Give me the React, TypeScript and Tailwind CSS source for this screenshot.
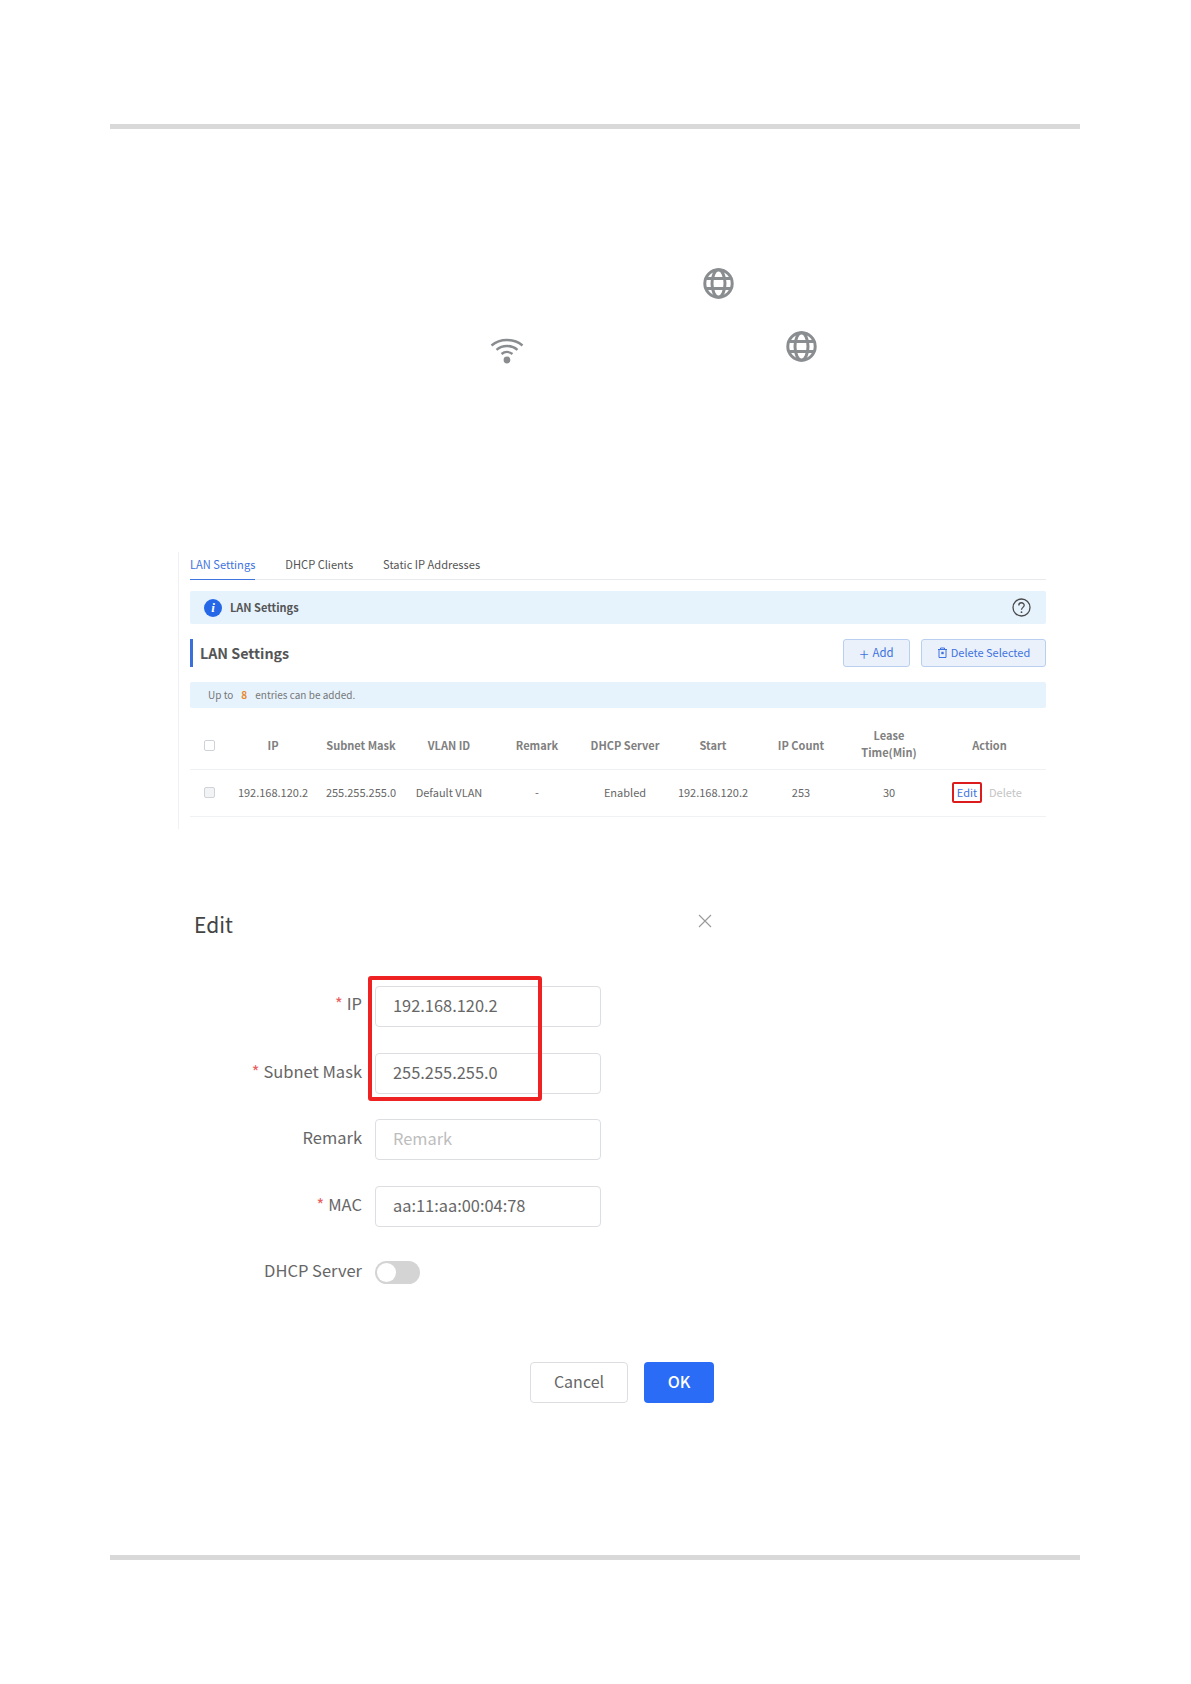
import React from "react";

const font = { fontFamily: '"Noto Sans CJK SC", "Noto Sans", sans-serif' };

function Globe() {
  return (
    <svg width="31" height="31" viewBox="0 0 31 31" fill="none" stroke="#8a8d90" strokeWidth="3">
      <circle cx="15.5" cy="15.5" r="13.7" />
      <ellipse cx="15.5" cy="15.5" rx="6.5" ry="13.7" />
      <path d="M3.5 10.5h24M3.5 20.5h24" />
    </svg>
  );
}

function Wifi() {
  return (
    <svg width="34" height="27" viewBox="0 0 34 27" fill="none" stroke="#8a8d90" strokeWidth="2.4">
      <path d="M1.5 8.5C10 1.2 24 1.2 32.500 8.500" />
      <path d="M6.500 12.800C12.500 7.800 21.500 7.800 27.500 12.800" />
      <path d="M11.500 17C14.800 14.400 19.200 14.400 22.500 17" />
      <circle cx="17" cy="23" r="3.400" fill="#8a8d90" stroke="none" />
    </svg>
  );
}

function Trash() {
  return (
    <svg width="11" height="11" viewBox="0 0 11 11" fill="none" stroke="#3f73e0" strokeWidth="1">
      <path d="M1 2.500h9M3.500 2.500V1h4v1.500M2 2.500V10.500h7V2.500" />
      <rect x="4.300" y="4.800" width="2.400" height="2.400" fill="#3f73e0" stroke="none" />
    </svg>
  );
}

const headers = ["IP", "Subnet Mask", "VLAN ID", "Remark", "DHCP Server", "Start", "IP Count"];
const cells = ["192.168.120.2", "255.255.255.0", "Default VLAN", "-", "Enabled", "192.168.120.2", "253", "30"];

function Checkbox({ filled }: { filled?: boolean }) {
  return (
    <div className={`h-[11px] w-[11px] rounded-[2px] border border-[#cfd3d8] ${filled ? "bg-[#f2f3f5]" : "bg-white"}`} />
  );
}

function LanTable() {
  return (
    <div className="ml-[178px] h-[277px] w-[868px] border-l border-[#f0f1f3] pl-[11px] pt-[3px]">
      <div className="flex h-[25px] gap-[30px] border-b border-[#e8eaed] text-[11.100px] leading-[18px] text-[#555]">
        <div className="h-[25px] border-b border-[#3f73e0] text-[#3f73e0]">LAN Settings</div>
        <div>DHCP Clients</div>
        <div>Static IP Addresses</div>
      </div>
      <div className="mt-[11px] flex h-[33px] items-center rounded-[2px] bg-[#e6f3fd] pl-[14px] pr-[15px]">
        <div className="flex h-[18px] w-[18px] items-center justify-center rounded-full bg-[#2468e8] text-[13px] font-bold italic leading-none text-white" style={{ fontFamily: '"Liberation Serif", serif' }}>
          i
        </div>
        <div className="ml-[8px] text-[11px] font-bold text-[#555]">LAN Settings</div>
        <svg className="ml-auto" width="19" height="19" viewBox="0 0 19 19" fill="none" stroke="#4a4a4a" strokeWidth="1.300">
          <circle cx="9.500" cy="9.500" r="8.500" />
          <path d="M6.800 7.400C6.800 3.900 12.200 3.900 12.200 7.300C12.200 9.300 9.500 9.500 9.500 11.800" />
          <circle cx="9.500" cy="14.200" r="0.900" fill="#4a4a4a" stroke="none" />
        </svg>
      </div>
      <div className="mt-[15px] flex h-[28px] items-center">
        <div className="h-full w-[3px] bg-[#3a6fdc]" />
        <div className="ml-[7px] text-[14.300px] font-bold text-[#555]">LAN Settings</div>
        <div className="ml-auto flex h-[28px] w-[67px] items-center justify-center gap-[4px] rounded-[3px] border border-[#b9cff0] bg-[#eaf1fb] text-[11.400px] text-[#3f73e0]">
          <span className="text-[17px] font-light leading-none">+</span>Add
        </div>
        <div className="ml-[11px] flex h-[28px] w-[125px] items-center justify-center gap-[3px] rounded-[3px] border border-[#b9cff0] bg-[#eaf1fb] pb-[2px] text-[11px] text-[#3f73e0]">
          <Trash />Delete Selected
        </div>
      </div>
      <div className="mt-[15px] flex h-[26px] items-center rounded-[2px] bg-[#e6f3fd] pb-[1px] pl-[18px] text-[10px] text-[#777]">
        Up to<span className="mx-[8px] font-bold text-[#e8862e]">8</span>entries can be added.
      </div>
      <div className="mt-[10px] grid h-[52px] grid-cols-[39px_repeat(8,88px)_113px] items-center border-b border-[#f0f1f3] pt-[4px] text-center text-[11px] font-bold text-[#808080]">
        <div className="pl-[14px]"><Checkbox /></div>
        {headers.map((h) => (
          <div key={h}>{h}</div>
        ))}
        <div className="-mt-[4px] leading-[17px]">Lease<br />Time(Min)</div>
        <div>Action</div>
      </div>
      <div className="grid h-[47px] grid-cols-[39px_repeat(8,88px)_113px] items-center border-b border-[#f0f1f3] pb-[2px] text-center text-[11px] text-[#666]">
        <div className="pl-[14px]"><Checkbox filled /></div>
        {cells.map((c, i) => (
          <div key={i}>{c}</div>
        ))}
        <div className="flex items-center pl-[19px]">
          <div className="flex h-[21px] w-[30px] items-center justify-center rounded-[2px] border-2 border-[#dc1c1c] text-[#3f73e0]">Edit</div>
          <div className="ml-[7px] text-[#c4c4c4]">Delete</div>
        </div>
      </div>
    </div>
  );
}

function Field({ label, req, value, placeholder, first }: { label: string; req?: boolean; value?: string; placeholder?: string; first?: boolean }) {
  return (
    <div className="flex h-[41px] items-center">
      <div className={`${first ? "-mt-[7px]" : "-mt-[4px]"} w-[180px] text-right text-[16.500px] text-[#666]`}>
        {req && <span className="mr-[4px] text-[#e86060]">*</span>}
        {label}
      </div>
      <div className={`ml-[13px] flex h-[41px] w-[226px] items-center rounded-[4px] border border-[#dcdee2] pb-[2px] pl-[17px] text-[16.400px] ${placeholder ? "text-[#bdbdbd]" : "text-[#666]"}`}>
        {value ?? placeholder}
      </div>
    </div>
  );
}

function EditDialog() {
  return (
    <div className="relative ml-[194px] mt-[79px] w-[520px]">
      <div className="flex h-[34px] items-center justify-between">
        <div className="-mt-[1px] text-[21px] leading-none text-[#444]">Edit</div>
        <svg className="mb-[9px] mr-[2px]" width="14" height="14" viewBox="0 0 14 14" fill="none" stroke="#999" strokeWidth="1.100">
          <path d="M1 1l12 12M13 1L1 13" />
        </svg>
      </div>
      <div className="ml-[-12px] mt-[44px] flex flex-col gap-[25.500px]">
        <Field label="IP" req value="192.168.120.2" first />
        <Field label="Subnet Mask" req value="255.255.255.0" />
        <Field label="Remark" placeholder="Remark" />
        <Field label="MAC" req value="aa:11:aa:00:04:78" />
      </div>
      <div className="ml-[-12px] mt-[34px] flex h-[23px] items-center">
        <div className="-mt-[3px] w-[180px] text-right text-[16.500px] text-[#666]">DHCP Server</div>
        <div className="ml-[13px] h-[23px] w-[45px] rounded-full bg-[#d4d4d4] p-[2px]">
          <div className="h-[19px] w-[19px] rounded-full bg-white" />
        </div>
      </div>
      <div className="mt-[78px] flex h-[41px] gap-[16px] pl-[336px]">
        <div className="flex w-[98px] items-center justify-center rounded-[4px] border border-[#dcdee2] pb-[2px] text-[16px] text-[#666]">Cancel</div>
        <div className="flex w-[70px] items-center justify-center rounded-[4px] bg-[#2b6cf6] pb-[2px] text-[16px] font-medium text-white">OK</div>
      </div>
      <div className="absolute left-[174px] top-[68px] h-[125px] w-[174px] rounded-[3px] border-[4px] border-[#ee2222]" />
    </div>
  );
}

export default function App() {
  return (
    <div className="h-[1684px] w-[1191px] bg-white pt-[124px]" style={font}>
      <div className="ml-[110px] mr-[111px] h-[5px] bg-[#d9d9d9]" />
      <div className="ml-[703px] mt-[139px] h-[31px]"><Globe /></div>
      <div className="mt-[32px] flex h-[31px] items-center">
        <div className="ml-[490px] mt-[8px]"><Wifi /></div>
        <div className="ml-[262px]"><Globe /></div>
      </div>
      <div className="mt-[190px]"><LanTable /></div>
      <EditDialog />
      <div className="ml-[110px] mr-[111px] mt-[152px] h-[5px] bg-[#d9d9d9]" />
    </div>
  );
}
